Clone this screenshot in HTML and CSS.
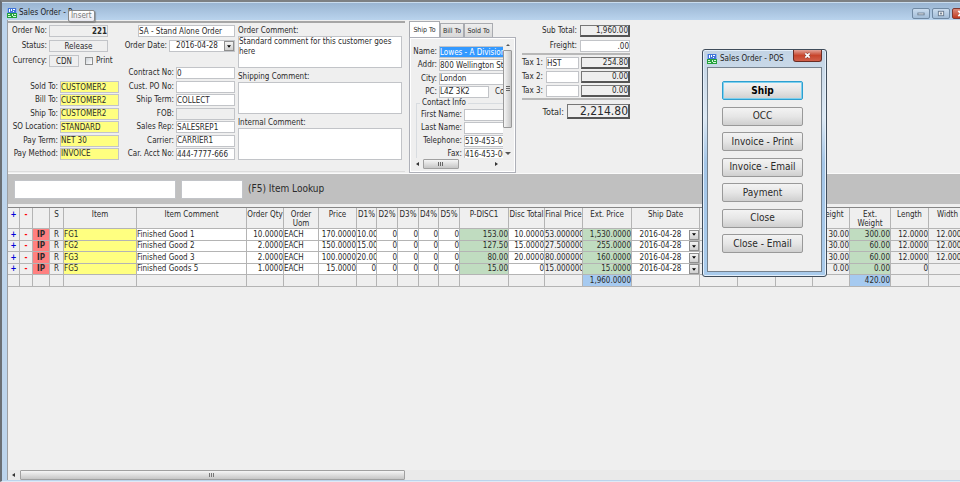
FILE: index.html
```html
<!DOCTYPE html>
<html lang="en">
<head>
<meta charset="utf-8">
<title>Sales Order - POS</title>
<link rel="stylesheet" href="styles.css">
</head>
<body>
<svg class="defs" aria-hidden="true">
  <symbol id="app" viewBox="0 0 10 10">
    <rect width="10" height="10" fill="#e4f2ee"/>
    <rect x="0" y="0" width="10" height="5" fill="#3f74d8"/>
    <path d="M0 0h1v5h-1zM9 0h1v5h-1z" fill="#8fb2ec"/>
    <path d="M2 1h1v3h-1zM4 1h1v2h-1zM6 1h2v1h-2zM6 3h1v1h-1z" fill="#fff"/>
    <rect x="0" y="5" width="10" height="5" fill="#23a03c"/>
    <path d="M1 6h2v1h-2zM1 8h3v1h-3zM5 6h1v2h-1zM7 6h2v1h-2zM6 8h3v1h-3z" fill="#d4f8d8"/>
  </symbol>
  <symbol id="down" viewBox="0 0 6 4"><path d="M0 0h6L3 4z"/></symbol>
</svg>
<div class="window">
  <header class="titlebar">
    <svg class="app-icon"><use href="#app"/></svg>
    <h1>Sales Order - P</h1>
    <div class="win-buttons">
      <button aria-label="Minimize"><svg viewBox="0 0 18 10"><rect x="5.500" y="4.500" width="7" height="2" fill="#fff" stroke="#66788c"/></svg></button>
      <button aria-label="Maximize"><svg viewBox="0 0 18 10"><rect x="6" y="2.500" width="6" height="5" fill="#eee" stroke="#66788c"/><rect x="8" y="4" width="2" height="2" fill="#66788c"/></svg></button>
      <button class="close" aria-label="Close window"><svg viewBox="0 0 18 10"><path d="M6 2l6 6M12 2l-6 6" stroke="#fff" stroke-width="2"/></svg></button>
    </div>
    <div class="tooltip" role="tooltip">Insert</div>
  </header>

  <main class="client">
    <section class="top">
      <div class="order">
        <div class="col-a">
          <div class="line"><label for="no">Order No:</label><input id="no" class="flat bold right wide" value="221" readonly></div>
          <div class="line"><label for="status">Status:</label><button id="status" class="flat wide">Release</button></div>
          <div class="line"><label for="cur">Currency:</label><button id="cur" class="flat cur">CDN</button><input type="checkbox" id="print"><label for="print" class="print">Print</label></div>
          <div class="rows six">
            <label for="sold">Sold To:</label><input id="sold" class="yellow" value="CUSTOMER2">
            <label for="bill">Bill To:</label><input id="bill" class="yellow" value="CUSTOMER2">
            <label for="ship">Ship To:</label><input id="ship" class="yellow" value="CUSTOMER2">
            <label for="loc">SO Location:</label><input id="loc" class="yellow" value="STANDARD">
            <label for="term">Pay Term:</label><input id="term" class="yellow" value="NET 30">
            <label for="meth">Pay Method:</label><input id="meth" class="yellow" value="INVOICE">
          </div>
        </div>
        <div class="col-b">
          <div class="line end"><input class="type" aria-label="Order type" value="SA - Stand Alone Order"></div>
          <div class="line end"><label for="date">Order Date:</label><div class="combo"><select id="date"><option>2016-04-28</option></select><span class="drop"><svg><use href="#down"/></svg></span></div></div>
          <div class="rows seven">
            <label for="con">Contract No:</label><input id="con" value="0">
            <label for="po">Cust. PO No:</label><input id="po">
            <label for="st">Ship Term:</label><input id="st" value="COLLECT">
            <label for="fob">FOB:</label><input id="fob" class="grey">
            <label for="rep">Sales Rep:</label><input id="rep" value="SALESREP1">
            <label for="car">Carrier:</label><input id="car" value="CARRIER1">
            <label for="acct">Car. Acct No:</label><input id="acct" value="444-7777-666">
          </div>
        </div>
        <div class="col-c">
          <label for="oc">Order Comment:</label><textarea id="oc">Standard comment for this customer goes here</textarea>
          <label for="sc">Shipping Comment:</label><textarea id="sc"></textarea>
          <label for="ic">Internal Comment:</label><textarea id="ic"></textarea>
        </div>
      </div>

      <div class="address">
        <div class="tabs" role="tablist">
          <button role="tab" class="active">Ship To</button><button role="tab">Bill To</button><button role="tab">Sold To</button>
        </div>
        <div class="tab-body">
          <div class="view">
            <div class="addr-rows">
              <label for="nm">Name:</label><input id="nm" class="selected" value="Lowes - A Division of">
              <label for="ad">Addr:</label><input id="ad" value="800 Wellington Street">
              <label for="ci">City:</label><input id="ci" value="London">
              <label for="pc">PC:</label><div class="pc"><input id="pc" value="L4Z 3K2"><span>Co</span></div>
            </div>
            <fieldset>
              <legend>Contact Info</legend>
              <div class="contact-rows">
                <label for="fn">First Name:</label><input id="fn">
                <label for="ln">Last Name:</label><input id="ln">
                <label for="te">Telephone:</label><input id="te" value="519-453-0000">
                <label for="fx">Fax:</label><input id="fx" value="416-453-0000">
              </div>
            </fieldset>
          </div>
          <div class="vbar">
            <svg viewBox="0 0 10 10"><path d="M5 4l2 2H3z" fill="#555"/></svg>
            <div class="vthumb"><svg viewBox="0 0 6 6"><path d="M1 .5h4M1 2.500h4M1 4.500h4" stroke="#666"/></svg></div>
            <svg viewBox="0 0 10 10"><path d="M5 7L2 4h6z" fill="#555"/></svg>
          </div>
          <div class="hbar">
            <svg viewBox="0 0 10 10"><path d="M3 5l3-2v4z" fill="#333"/></svg>
            <div class="hthumb"><svg viewBox="0 0 6 6"><path d="M.5 1v4M2.500 1v4M4.500 1v4" stroke="#666"/></svg></div>
            <svg class="far" viewBox="0 0 10 10"><path d="M7 5L4 3v4z" fill="#333"/></svg>
          </div>
        </div>
      </div>

      <div class="totals">
        <div class="trow"><label for="sub">Sub Total:</label><input id="sub" class="sum" value="1,960.00" readonly></div>
        <div class="trow"><label for="fr">Freight:</label><input id="fr" class="num" value=".00"></div>
        <hr>
        <div class="trow tax"><label for="t1">Tax 1:</label><input id="t1" class="code" value="HST"><input class="sum" aria-label="Tax 1 amount" value="254.80" readonly></div>
        <div class="trow tax"><label for="t2">Tax 2:</label><input id="t2" class="code"><input class="sum" aria-label="Tax 2 amount" value="0.00" readonly></div>
        <div class="trow"><label for="t3">Tax 3:</label><input id="t3" class="code"><input class="sum" aria-label="Tax 3 amount" value="0.00" readonly></div>
        <hr>
        <div class="trow grand"><label for="tot">Total:</label><input id="tot" class="sum" value="2,214.80" readonly></div>
      </div>
    </section>

    <section class="lookup">
      <input id="look" class="code-in"><input class="qty-in" aria-label="Lookup quantity">
      <label for="look">(F5) Item Lookup</label>
    </section>

    <section class="grid">
      <table>
        <colgroup><col class="w12"><col class="w13"><col class="w17"><col class="w14"><col class="w73"><col class="w110"><col class="w37"><col class="w35"><col class="w38"><col class="w20"><col class="w21"><col class="w21"><col class="w20"><col class="w21"><col class="w49"><col class="w36"><col class="w38"><col class="w49"><col class="w68"><col class="w38"><col class="w38"><col class="w37"><col class="w37"><col class="w41"><col class="w38"><col class="w38"></colgroup>
        <thead><tr><th class="plus">+</th><th class="minus">-</th><th></th><th>S</th><th>Item</th><th>Item Comment</th><th>Order Qty</th><th>Order<br>Uom</th><th>Price</th><th>D1%</th><th>D2%</th><th>D3%</th><th>D4%</th><th>D5%</th><th>P-DISC1</th><th>Disc Total</th><th>Final Price</th><th>Ext. Price</th><th>Ship Date</th><th></th><th></th><th></th><th>Weight</th><th>Ext.<br>Weight</th><th>Length</th><th>Width</th></tr></thead>
        <tbody>
          <tr><td class="plus">+</td><td class="minus">-</td><td class="ip">IP</td><td class="c">R</td><td class="y">FG1</td><td class="w">Finished Good 1</td><td class="w n">10.0000</td><td class="w">EACH</td><td class="w n">170.0000</td><td class="w n">10.00</td><td class="w n">0</td><td class="w n">0</td><td class="w n">0</td><td class="w n">0</td><td class="g n">153.00</td><td class="w n">10.0000</td><td class="n">53.000000</td><td class="g n">1,530.0000</td><td class="w"><div class="combo"><select aria-label="Ship date"><option>2016-04-28</option></select><span class="drop"><svg><use href="#down"/></svg></span></div></td><td></td><td></td><td></td><td class="n">30.00</td><td class="g n">300.00</td><td class="n">12.0000</td><td class="n">12.0000</td></tr>
          <tr><td class="plus">+</td><td class="minus">-</td><td class="ip">IP</td><td class="c">R</td><td class="y">FG2</td><td class="w">Finished Good 2</td><td class="w n">2.0000</td><td class="w">EACH</td><td class="w n">150.0000</td><td class="w n">15.00</td><td class="w n">0</td><td class="w n">0</td><td class="w n">0</td><td class="w n">0</td><td class="g n">127.50</td><td class="w n">15.0000</td><td class="n">27.500000</td><td class="g n">255.0000</td><td class="w"><div class="combo"><select aria-label="Ship date"><option>2016-04-28</option></select><span class="drop"><svg><use href="#down"/></svg></span></div></td><td></td><td></td><td></td><td class="n">30.00</td><td class="g n">60.00</td><td class="n">12.0000</td><td class="n">12.0000</td></tr>
          <tr><td class="plus">+</td><td class="minus">-</td><td class="ip">IP</td><td class="c">R</td><td class="y">FG3</td><td class="w">Finished Good 3</td><td class="w n">2.0000</td><td class="w">EACH</td><td class="w n">100.0000</td><td class="w n">20.00</td><td class="w n">0</td><td class="w n">0</td><td class="w n">0</td><td class="w n">0</td><td class="g n">80.00</td><td class="w n">20.0000</td><td class="n">80.000000</td><td class="g n">160.0000</td><td class="w"><div class="combo"><select aria-label="Ship date"><option>2016-04-28</option></select><span class="drop"><svg><use href="#down"/></svg></span></div></td><td></td><td></td><td></td><td class="n">30.00</td><td class="g n">60.00</td><td class="n">12.0000</td><td class="n">12.0000</td></tr>
          <tr><td class="plus">+</td><td class="minus">-</td><td class="ip">IP</td><td class="c">R</td><td class="y">FG5</td><td class="w">Finished Goods 5</td><td class="w n">1.0000</td><td class="w">EACH</td><td class="w n">15.0000</td><td class="w n">0</td><td class="w n">0</td><td class="w n">0</td><td class="w n">0</td><td class="w n">0</td><td class="g n">15.00</td><td class="w n">0</td><td class="n">15.000000</td><td class="g n">15.0000</td><td class="w"><div class="combo"><select aria-label="Ship date"><option>2016-04-28</option></select><span class="drop"><svg><use href="#down"/></svg></span></div></td><td></td><td></td><td></td><td class="n">0.00</td><td class="g n">0.00</td><td class="n">0</td><td></td></tr>
          <tr><td></td><td></td><td></td><td></td><td></td><td></td><td></td><td></td><td></td><td></td><td></td><td></td><td></td><td></td><td></td><td></td><td></td><td class="b n">1,960.0000</td><td></td><td></td><td></td><td></td><td></td><td class="b n">420.00</td><td></td><td></td></tr>
        </tbody>
      </table>
    </section>
    <div class="scroll">
      <svg viewBox="0 0 10 10"><path d="M3 5l3-2v4z" fill="#333"/></svg>
      <div class="thumb"><svg viewBox="0 0 6 6"><path d="M.5 1v4M2.500 1v4M4.500 1v4" stroke="#777"/></svg></div>
    </div>
  </main>

  <div class="dialog" role="dialog" aria-labelledby="dlg">
    <div class="dialog-title">
      <svg class="app-icon"><use href="#app"/></svg><h2 id="dlg">Sales Order - POS</h2>
      <button class="x" aria-label="Close dialog"><svg viewBox="0 0 8 8"><path d="M1.500 1.500l5 5M6.500 1.500l-5 5" stroke="#6b3030" stroke-width="3"/><path d="M1.500 1.500l5 5M6.500 1.500l-5 5" stroke="#fff" stroke-width="2"/></svg></button>
    </div>
    <div class="dialog-body">
      <button class="default">Ship</button>
      <button>OCC</button>
      <button>Invoice - Print</button>
      <button>Invoice - Email</button>
      <button>Payment</button>
      <button>Close</button>
      <button>Close - Email</button>
    </div>
  </div>
</div>
</body>
</html>
```
FILE: styles.css
```css
* { box-sizing: border-box; }
body {
  margin: 0;
  font: 8px/10px "DejaVu Sans Condensed", "DejaVu Sans", sans-serif;
  color: #2a2a2a;
  background: #efefef;
  overflow: hidden;
}
button, input, select, textarea {
  font: inherit;
  color: inherit;
  margin: 0;
  padding: 0;
  border: 1px solid #c2c4c8;
  border-radius: 0;
  background: #fff;
  min-width: 0;
}
input { height: 12px; }
label { white-space: nowrap; text-align: right; }
.defs { position: absolute; width: 0; height: 0; }

.window {
  position: relative;
  display: flex;
  flex-direction: column;
  height: 100vh;
  border-top: 2px solid #7d8083;
  border-left: 2px solid #6a6f75;
  border-bottom: 1px solid #dfeaf6;
  background: #bcd4ec;
  padding: 0 0 1px 5px;
  overflow: hidden;
}
.titlebar {
  position: relative;
  display: flex;
  align-items: center;
  height: 18px;
  flex: none;
  margin-left: -5px;
  padding: 3px 0 0 5px;
  border-top: 1px solid #c9dcee;
  background: linear-gradient(#9ab5d2, #b9d3ed);
}
.app-icon { width: 10px; height: 10px; }
h1, h2 { margin: 0; font: 8px/10px "DejaVu Sans Condensed", "DejaVu Sans", sans-serif; color: #222; }
h1 { margin-left: 2px; }
.win-buttons { display: flex; gap: 2px; margin: 0 -10px 0 auto; }
.win-buttons button {
  width: 18px;
  height: 11px;
  border: 1px solid #7089a3;
  border-radius: 2px;
  background: linear-gradient(#cadcee, #a3bdd8);
}
.win-buttons svg { display: block; width: 16px; height: 9px; }
.win-buttons .close { background: linear-gradient(#dc8b7c, #c03b22); border-color: #803830; }
.tooltip {
  position: absolute;
  left: 66px;
  top: 7px;
  padding: 0 2px;
  border: 1px solid #888;
  border-radius: 2px;
  background: linear-gradient(#fff, #e8e8f0);
  color: #777;
  box-shadow: 1px 1px 1px #6668;
}

.client {
  flex: 1;
  min-height: 0;
  display: flex;
  flex-direction: column;
  border-left: 1px solid #9c9fa3;
  background: #efefef;
}
.top { display: flex; align-items: flex-start; height: 154px; padding-top: 1px; border-bottom: 1px solid #fafafa; flex: none; }
.order {
  display: flex;
  width: 397px;
  height: 151px;
  border-top: 2px solid #a6a6a6;
  border-bottom: 1px solid #dcdcdc;
  padding-top: 2px;
  flex: none;
}
.col-a { width: 111px; }
.line { display: flex; align-items: center; height: 12px; gap: 2px; margin-bottom: 3px; }
.col-a .line > label:first-child { width: 39px; }
.flat { height: 12px; background: #efefef; line-height: 9px; }
.wide { width: 59px; }
.cur { width: 30px; }
.bold { font-weight: bold; }
.right { text-align: right; }
input[type="checkbox"] {
  appearance: none;
  width: 8px;
  height: 8px;
  margin-left: 4px;
  border: 1px solid #8e8f8f;
  background: linear-gradient(135deg, #ccd2d8, #fff);
}
.print { margin-left: 1px; }
.rows { display: grid; align-content: space-between; align-items: center; column-gap: 2px; }
.rows label { line-height: 10px; }
.six { height: 79px; margin-top: 14px; grid-template-columns: 50px 59px; }
.yellow { background: #ffff80; }
.col-b { width: 116px; }
.end { justify-content: flex-end; }
.type { width: 97px; }
.combo { display: flex; width: 66px; height: 12px; border: 1px solid #c2c4c8; background: #fff; }
.combo select { flex: 1; border: 0; appearance: none; text-align: center; text-align-last: center; background: transparent; }
.drop {
  display: flex;
  align-items: center;
  justify-content: center;
  width: 10px;
  border: 1px solid #8f8f8f;
  background: linear-gradient(#f4f4f4, #cfcfcf);
}
.drop svg { width: 4px; height: 3px; }
.seven { height: 93px; margin-top: 15px; grid-template-columns: 55px 59px; }
.grey { background: #efefef; }
.col-c { display: flex; flex-direction: column; width: 164px; margin-left: 3px; }
.col-c label { height: 11px; text-align: left; line-height: 12px; }
textarea { display: block; height: 32px; margin-bottom: 3px; resize: none; overflow: hidden; }

.address { width: 107px; margin: 0 0 0 4px; flex: none; }
.tabs { display: flex; align-items: flex-end; height: 16px; }
.tabs button {
  height: 14px;
  width: 24px;
  border-color: #a9abb0;
  border-bottom: 0;
  background: linear-gradient(#eee, #d8d8d8);
  white-space: nowrap;
  font-size: 7px;
}
.tabs button:last-child { width: 29px; }
.tabs .active { height: 16px; width: 31px; background: #fff; }
.tab-body {
  display: grid;
  grid-template-columns: 90px 10px;
  grid-template-rows: 118px 12px;
  justify-content: end;
  border: 1px solid #aeb0b8;
  box-shadow: inset 0 0 0 1px #fff;
  padding: 2px;
}
.view { overflow: hidden; padding-top: 6px; }
.addr-rows { display: grid; grid-template-columns: 24px 90px; column-gap: 2px; height: 52px; align-content: space-between; align-items: center; }
.selected { background: #3399ff; color: #fff; }
.pc { display: flex; gap: 6px; align-items: center; }
.pc input { width: 50px; }
fieldset { width: 130px; margin: 0 0 0 3px; padding: 0; border: 1px solid #d8dce0; }
legend { margin-left: 3px; padding: 0 2px; line-height: 10px; }
.contact-rows { display: grid; grid-template-columns: 45px 70px; column-gap: 2px; row-gap: 1px; align-items: center; padding-top: 1px; }
.vbar { display: flex; flex-direction: column; }
.vbar > svg { width: 10px; height: 10px; }
.vthumb { display: flex; align-items: center; justify-content: center; width: 9px; height: 78px; margin-bottom: 20px; border: 1px solid #999; border-radius: 1px; background: linear-gradient(90deg, #f5f5f5, #c8c8c8); }
.vthumb svg, .hthumb svg, .thumb svg { width: 6px; height: 6px; }
.hbar { display: flex; align-items: center; grid-column: 1 / 3; }
.hbar > svg { width: 10px; height: 10px; }
.hthumb, .thumb { display: flex; align-items: center; justify-content: center; height: 10px; border: 1px solid #a0a0a0; border-radius: 1px; background: linear-gradient(#f5f5f5, #c6c6c6); }
.hthumb { width: 36px; }
.far { margin-left: 32px; }

.totals { width: 108px; margin: 4px 0 0 6px; flex: none; }
.trow { display: flex; justify-content: flex-end; align-items: center; gap: 2px; height: 12px; margin-bottom: 3px; }
.tax { margin-bottom: 2px; }
.trow label { margin-right: 1px; }
.num { width: 50px; text-align: right; }
.code { width: 33px; }
.sum {
  width: 50px;
  text-align: right;
  background: #efefef;
  border: 1px solid #777;
  border-right: 2px solid #555;
  border-bottom: 2px solid #555;
}
.totals hr { height: 2px; margin: -2px 0 2px; border: 0; background: #b8b8b8; }
.trow.grand { height: 15px; margin-top: 4px; font-size: 9px; }
.grand .sum { width: 63px; height: 15px; font-size: 12px; line-height: 12px; }

.lookup { display: flex; align-items: center; height: 30px; flex: none; padding-left: 6px; background: #c0c0c0; }
.lookup input { height: 19px; }
.code-in { width: 162px; }
.qty-in { width: 62px; margin-left: 5px; }
.lookup label { margin-left: 5px; font-size: 10px; line-height: 12px; }

.grid { flex: 1; min-height: 0; margin-top: 3px; overflow: hidden; border-top: 1px solid #858585; }
table { table-layout: fixed; width: 959px; border-collapse: separate; border-spacing: 0; }
th, td { padding: 0; border-right: 1px solid #b4b4b4; border-bottom: 1px solid #b4b4b4; white-space: nowrap; overflow: hidden; line-height: 10px; }
th { height: 21px; vertical-align: top; font-weight: normal; text-align: center; line-height: 9px; padding-top: 2px; }
tbody tr { height: 12px; }
tbody tr:nth-child(even) { height: 11px; }
td.w { background: #fff; }
td.y { background: #ffff80; }
td.g { background: #c0dcc0; }
td.b { background: #a6caf0; }
td.n { text-align: right; }
td.c { text-align: center; }
td.ip { background: #ff8080; text-align: center; font-weight: bold; }
.plus { color: #0000d8; font-weight: bold; text-align: center; }
.minus { color: #f00; font-weight: bold; text-align: center; }
td .combo { width: auto; height: 10px; border: 0; }
td .combo select { line-height: 10px; }
.w12 { width: 12px; } .w13 { width: 13px; } .w14 { width: 14px; } .w17 { width: 17px; }
.w20 { width: 20px; } .w21 { width: 21px; } .w35 { width: 35px; } .w36 { width: 36px; }
.w37 { width: 37px; } .w38 { width: 38px; } .w41 { width: 41px; } .w49 { width: 49px; }
.w68 { width: 68px; } .w73 { width: 73px; } .w110 { width: 110px; }

.scroll { display: flex; height: 10px; flex: none; background: #eaeaea; }
.scroll > svg { width: 12px; height: 10px; }
.thumb { width: calc(40% + 4px); }

.dialog {
  position: absolute;
  left: 700px;
  top: 47px;
  width: 125px;
  padding: 0 4px 4px;
  border: 1px solid #3f4c5a;
  border-radius: 3px;
  background: linear-gradient(#c2d3e4, #dde9f4 30%, #a4c6e8 50%, #a9cbec);
  box-shadow: inset 0 0 0 1px #e4effa;
}
.dialog-title { display: flex; align-items: center; height: 17px; }
.dialog-title h2 { margin-left: 3px; }
.x {
  display: flex;
  justify-content: center;
  align-items: center;
  align-self: flex-start;
  width: 29px;
  height: 12px;
  margin-left: auto;
  border: 1px solid #6a2c24;
  border-top: 0;
  border-radius: 0 0 3px 3px;
  background: linear-gradient(#e2a398, #c8452c 50%, #d0604a);
}
.x svg { width: 7px; height: 7px; }
.dialog-body {
  display: flex;
  flex-direction: column;
  justify-content: space-between;
  height: 205px;
  padding: 13px 18px 18px 14px;
  border: 1px solid #76828e;
  background: #efefef;
}
.dialog-body button {
  height: 19px;
  border: 1px solid #999;
  border-radius: 2px;
  background: linear-gradient(#f3f3f3, #e6e6e6 50%, #cfcfcf);
  font-size: 10px;
  line-height: 12px;
  white-space: nowrap;
}
.dialog-body .default { border: 1px solid #2c9fd0; box-shadow: inset 0 0 0 1px #7fd0ee; font-weight: bold; color: #000; }
```
